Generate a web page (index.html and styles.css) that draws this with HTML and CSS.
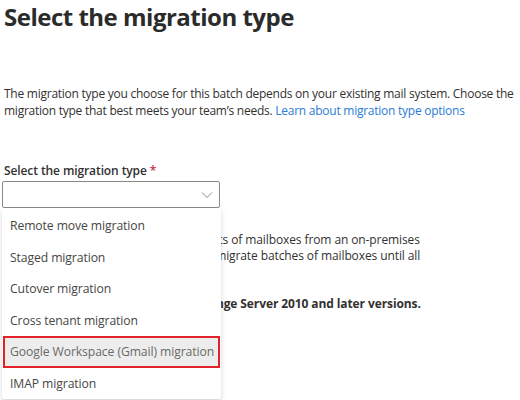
FILE: index.html
```html
<!DOCTYPE html>
<html>
<head>
<meta charset="utf-8">
<link rel="stylesheet" href="styles.css">
</head>
<body>
<div class="page">
  <h1 class="title">Select the migration type</h1>
  <p class="intro">The migration type you choose for this batch depends on your existing mail system. Choose the migration type that best meets your team’s needs. <a class="link" href="#">Learn about migration type options</a></p>
  <div class="field">
    <div class="label">Select the migration type <span class="req">*</span></div>
    <div class="select">
      <svg class="chev" width="12" height="8" viewBox="0 0 12 8"><path d="M1 1.5 L6 6.5 L11 1.5" fill="none" stroke="#8a8886" stroke-width="1"/></svg>
    </div>
    <ul class="menu">
      <li class="item">Remote move migration</li>
      <li class="item">Staged migration</li>
      <li class="item">Cutover migration</li>
      <li class="item">Cross tenant migration</li>
      <li class="item selected">Google Workspace (Gmail) migration</li>
      <li class="item">IMAP migration</li>
    </ul>
  </div>
  <div class="desc">
    <p class="desc-text">Staged migration: Use to move large sets of mailboxes from an on-premises<br>Exchange server to the cloud. You can migrate batches of mailboxes until all<br>mailboxes are moved.</p>
    <p class="desc-bold">Staged migration is used with Exchange Server 2010 and later versions.</p>
  </div>
</div>
</body>
</html>
```
FILE: styles.css
```css
html, body {
  margin: 0;
  padding: 0;
  background: #ffffff;
}
body {
  font-family: "Open Sans", "Noto Sans", sans-serif;
  color: #323130;
  width: 520px;
  height: 400px;
  overflow: hidden;
}
.page {
  padding: 0 0 0 4px;
}
.title {
  margin: 0;
  padding-top: 1px;
  font-size: 24px;
  font-weight: 700;
  line-height: 32px;
  color: #2b2b2b;
  letter-spacing: -0.5px;
}
.intro {
  margin: 52px 0 0 0;
  width: 516px;
  font-size: 12px;
  letter-spacing: -0.25px;
  line-height: 17px;
  color: #323130;
}
.link {
  color: #2b7bd6;
  text-decoration: none;
}
.field {
  position: relative;
  margin-top: 43px;
  margin-left: -2px;
}
.label {
  font-size: 12px;
  letter-spacing: -0.1px;
  font-weight: 600;
  line-height: 17px;
  margin-left: 2px;
  color: #323130;
}
.req {
  color: #c4314b;
}
.select {
  margin-top: 2px;
  width: 216px;
  height: 25px;
  border: 1px solid #8a8886;
  border-radius: 2px;
  display: flex;
  align-items: center;
  justify-content: flex-end;
}
.chev {
  margin-right: 6px;
}
.menu {
  position: absolute;
  left: 0;
  top: 46px;
  width: 219px;
  margin: 0;
  padding: 2px 0 0 0;
  list-style: none;
  background: #ffffff;
  box-shadow: 0 3px 6px rgba(0,0,0,0.12), 0 1px 2px rgba(0,0,0,0.08);
  border-radius: 2px;
  z-index: 2;
}
.item {
  height: 31.5px;
  line-height: 31.5px;
  padding-left: 8px;
  font-size: 12.2px;
  letter-spacing: -0.1px;
  color: #484644;
  box-sizing: border-box;
  white-space: nowrap;
}
.selected {
  background: #ededed;
  border: 2px solid #e3212b;
  margin: 0 1px;
  padding-left: 5px;
  line-height: 27.5px;
  color: #6b6967;
}
.desc {
  margin-top: 24px;
  font-size: 12px;
  letter-spacing: -0.1px;
  line-height: 16px;
}
.desc-text {
  margin: 0;
  white-space: nowrap;
}
.desc-bold {
  margin: 16px 0 0 0;
  font-weight: 700;
  white-space: nowrap;
}
```
